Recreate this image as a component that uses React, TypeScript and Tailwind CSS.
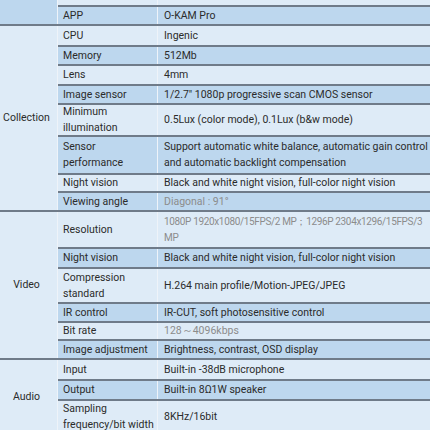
import React from 'react';

type Row = {
  label: string[];
  value: string[];
  h: number;
  muted?: boolean;
  small?: boolean;
};

type Section = {
  name: string;
  rows: Row[];
  dark?: boolean;
};

const sections: Section[] = [
  {
    name: 'Software',
    dark: true,
    rows: [
      { label: ['Platform'], value: ['Android / iOS'], h: 19 },
      { label: ['Mobile system'], value: ['Support Android 5.0+ / iOS 10.0+'], h: 23 },
      { label: ['APP'], value: ['O-KAM Pro'], h: 19 },
    ],
  },
  {
    name: 'Collection',
    rows: [
      { label: ['CPU'], value: ['Ingenic'], h: 19 },
      { label: ['Memory'], value: ['512Mb'], h: 19 },
      { label: ['Lens'], value: ['4mm'], h: 20 },
      { label: ['Image sensor'], value: ['1/2.7" 1080p progressive scan CMOS sensor'], h: 19 },
      { label: ['Minimum', 'illumination'], value: ['0.5Lux (color mode), 0.1Lux (b&w mode)'], h: 32 },
      {
        label: ['Sensor', 'performance'],
        value: ['Support automatic white balance, automatic gain control', 'and automatic backlight compensation'],
        h: 38,
      },
      { label: ['Night vision'], value: ['Black and white night vision, full-color night vision'], h: 18 },
      { label: ['Viewing angle'], value: ['Diagonal : 91°'], h: 19, muted: true },
    ],
  },
  {
    name: 'Video',
    rows: [
      {
        label: ['Resolution'],
        value: ['1080P 1920x1080/15FPS/2 MP；1296P 2304x1296/15FPS/3', 'MP'],
        h: 35,
        muted: true,
        small: true,
      },
      { label: ['Night vision'], value: ['Black and white night vision, full-color night vision'], h: 20 },
      { label: ['Compression', 'standard'], value: ['H.264 main profile/Motion-JPEG/JPEG'], h: 35 },
      { label: ['IR control'], value: ['IR-CUT, soft photosensitive control'], h: 19 },
      { label: ['Bit rate'], value: ['128～4096kbps'], h: 18, muted: true },
      { label: ['Image adjustment'], value: ['Brightness, contrast, OSD display'], h: 19 },
    ],
  },
  {
    name: 'Audio',
    rows: [
      { label: ['Input'], value: ['Built-in -38dB microphone'], h: 19 },
      { label: ['Output'], value: ['Built-in 8Ω1W speaker'], h: 20 },
      { label: ['Sampling', 'frequency/bit width'], value: ['8KHz/16bit'], h: 34 },
    ],
  },
  {
    name: 'Network',
    rows: [{ label: ['WiFi'], value: ['2.4GHz IEEE 802.11 b/g/n'], h: 19 }],
  },
];

const DARK = 'bg-[#bdd7ee]';
const LIGHT = 'bg-[#deebf7]';

export default function App() {
  let idx = 0;
  return (
    <div
      className="w-[430px] h-[430px] overflow-hidden bg-[#deebf7] text-[10.5px] text-[#2b2b2b]"
      style={{ fontFamily: 'Roboto, "Liberation Sans", sans-serif' }}
    >
      <div className="-mt-[37px]">
        {sections.map((s) => (
          <div key={s.name} className="flex border-b-2 border-[#6f7b89]">
            <div
              className={`w-[58px] shrink-0 flex items-center justify-center pr-[4px] border-r border-[#eef3f9] ${
                s.dark ? DARK : LIGHT
              }`}
            >
              {s.name}
            </div>
            <div className="flex-1 flex flex-col">
              {s.rows.map((r, i) => {
                const odd = (idx++ + 1) % 2 === 0;
                const bg = odd ? LIGHT : DARK;
                return (
                  <div
                    key={i}
                    className={`flex ${bg} ${i > 0 ? 'border-t-2 border-[#6f7b89]' : ''}`}
                    style={{ height: r.h }}
                  >
                    <div className="w-[100px] shrink-0 flex flex-col justify-center pl-[5px] leading-[16px] whitespace-nowrap border-r border-[#eef3f9]">
                      {r.label.map((t) => (
                        <span key={t}>{t}</span>
                      ))}
                    </div>
                    <div
                      className={`flex-1 flex flex-col justify-center pl-[6px] leading-[16px] whitespace-nowrap ${
                        r.muted ? 'text-[#8c8c8c]' : ''
                      } ${r.small ? 'text-[10px] tracking-[-0.35px]' : ''}`}
                    >
                      {r.value.map((t) => (
                        <span key={t}>{t}</span>
                      ))}
                    </div>
                  </div>
                );
              })}
            </div>
          </div>
        ))}
      </div>
    </div>
  );
}
